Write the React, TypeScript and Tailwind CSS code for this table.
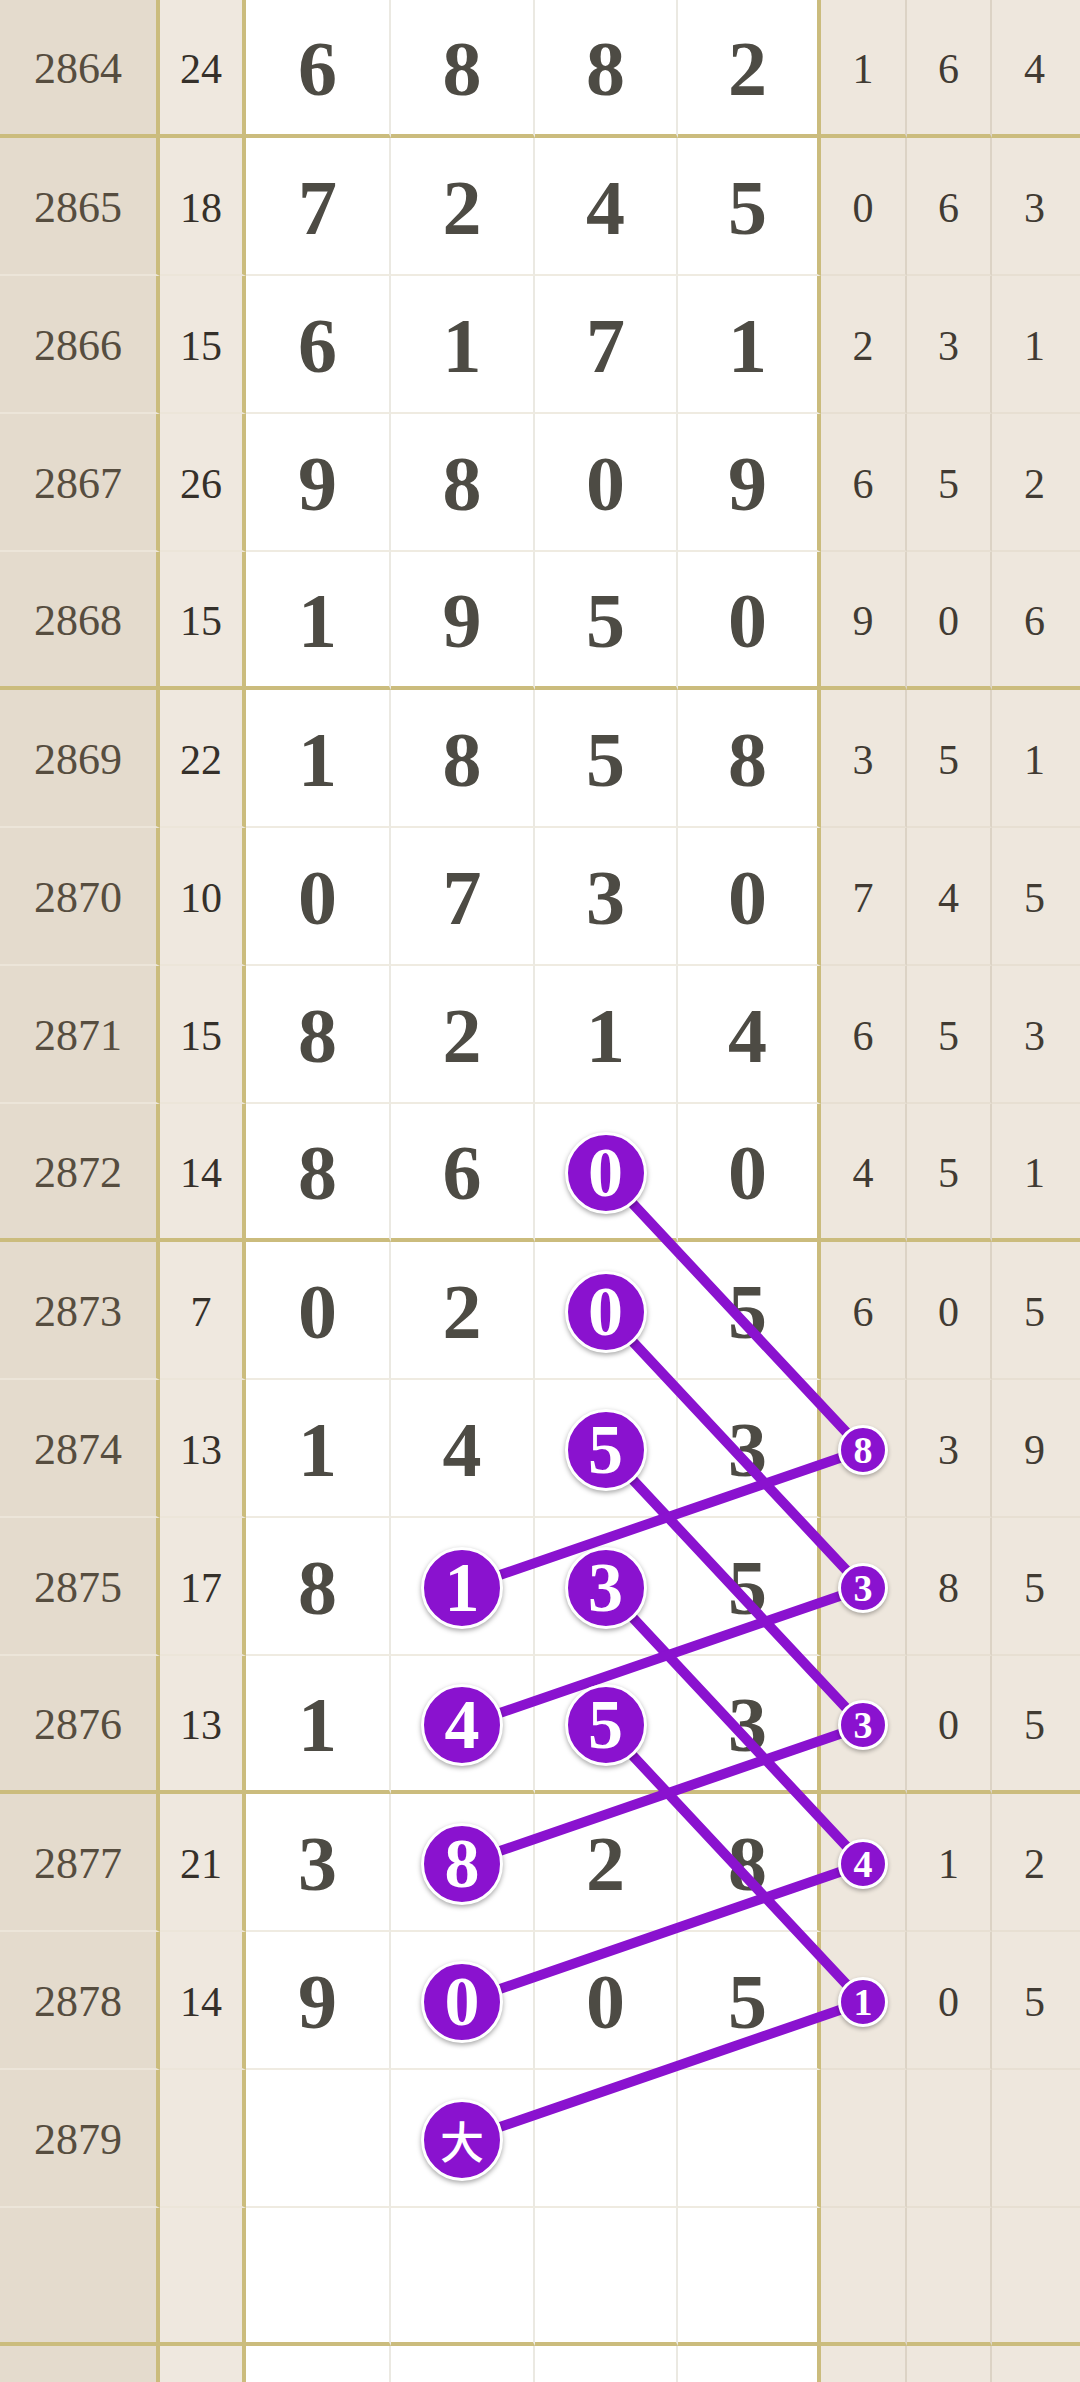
import type React from 'react'

type Row = {
  period: string
  sum: string
  main: string[]
  side: string[]
  mainBalls?: number[]
  sideBall?: boolean
}

const rows: Row[] = [
  { period: '2864', sum: '24', main: ['6', '8', '8', '2'], side: ['1', '6', '4'] },
  { period: '2865', sum: '18', main: ['7', '2', '4', '5'], side: ['0', '6', '3'] },
  { period: '2866', sum: '15', main: ['6', '1', '7', '1'], side: ['2', '3', '1'] },
  { period: '2867', sum: '26', main: ['9', '8', '0', '9'], side: ['6', '5', '2'] },
  { period: '2868', sum: '15', main: ['1', '9', '5', '0'], side: ['9', '0', '6'] },
  { period: '2869', sum: '22', main: ['1', '8', '5', '8'], side: ['3', '5', '1'] },
  { period: '2870', sum: '10', main: ['0', '7', '3', '0'], side: ['7', '4', '5'] },
  { period: '2871', sum: '15', main: ['8', '2', '1', '4'], side: ['6', '5', '3'] },
  { period: '2872', sum: '14', main: ['8', '6', '0', '0'], side: ['4', '5', '1'], mainBalls: [2] },
  { period: '2873', sum: '7', main: ['0', '2', '0', '5'], side: ['6', '0', '5'], mainBalls: [2] },
  { period: '2874', sum: '13', main: ['1', '4', '5', '3'], side: ['8', '3', '9'], mainBalls: [2], sideBall: true },
  { period: '2875', sum: '17', main: ['8', '1', '3', '5'], side: ['3', '8', '5'], mainBalls: [1, 2], sideBall: true },
  { period: '2876', sum: '13', main: ['1', '4', '5', '3'], side: ['3', '0', '5'], mainBalls: [1, 2], sideBall: true },
  { period: '2877', sum: '21', main: ['3', '8', '2', '8'], side: ['4', '1', '2'], mainBalls: [1], sideBall: true },
  { period: '2878', sum: '14', main: ['9', '0', '0', '5'], side: ['1', '0', '5'], mainBalls: [1], sideBall: true },
  { period: '2879', sum: '', main: ['', '大', '', ''], side: ['', '', ''], mainBalls: [1] },
  { period: '', sum: '', main: ['', '', '', ''], side: ['', '', ''] },
  { period: '', sum: '', main: ['', '', '', ''], side: ['', '', ''] },
]

// centres used by the connecting lines
const ROW_H = 138
const cy = (i: number) => i * ROW_H + 70
const COL2 = 462
const COL3 = 605
const SIDE = 863

const links: [number, number, number, number][] = [
  [COL3, cy(8), SIDE, cy(10)],
  [COL3, cy(9), SIDE, cy(11)],
  [COL3, cy(10), SIDE, cy(12)],
  [COL3, cy(11), SIDE, cy(13)],
  [COL3, cy(12), SIDE, cy(14)],
  [COL2, cy(11), SIDE, cy(10)],
  [COL2, cy(12), SIDE, cy(11)],
  [COL2, cy(13), SIDE, cy(12)],
  [COL2, cy(14), SIDE, cy(13)],
  [COL2, cy(15), SIDE, cy(14)],
]

const BigBall: React.FC<{ text: string }> = ({ text }) => (
  <div className="relative z-20 flex h-[82px] w-[82px] items-center justify-center rounded-full border-[3px] border-white bg-[#8a12cf] shadow-[0_2px_5px_rgba(0,0,0,0.35)]">
    {text === '大' ? (
      <span className="font-['Noto_Sans_CJK_SC',sans-serif] text-[44px] leading-none font-medium text-white">大</span>
    ) : (
      <span className="text-[70px] leading-none font-bold text-white">{text}</span>
    )}
  </div>
)

const SmallBall: React.FC<{ text: string }> = ({ text }) => (
  <div className="relative z-20 flex h-[50px] w-[50px] items-center justify-center rounded-full border-[3px] border-white bg-[#8a12cf] shadow-[0_2px_4px_rgba(0,0,0,0.3)]">
    <span className="text-[38px] leading-none font-bold text-white">{text}</span>
  </div>
)

const TableRow: React.FC<{ row: Row; index: number }> = ({ row, index }) => {
  const gold = index % 4 === 0
  const leftB = gold ? 'border-b-4 border-b-[#cbbc7d]' : 'border-b-2 border-b-[#ece5d9]'
  const mainB = gold ? 'border-b-4 border-b-[#cbbc7d]' : 'border-b-2 border-b-[#efebe1]'
  const sideB = gold ? 'border-b-4 border-b-[#cbbc7d]' : 'border-b-2 border-b-[#e7dfd2]'

  return (
    <div className="grid h-[138px] grid-cols-[160px_86px_145px_144px_143px_143px_86px_85px_85px_1fr]">
      <div className={`flex items-center justify-center border-r-4 border-r-[#cbbc7d] bg-[#e4dbcd] pt-[4px] text-[44px] text-[#564d3f] ${leftB}`}>
        {row.period}
      </div>
      <div className={`flex items-center justify-center border-r-4 border-r-[#cbbc7d] bg-[#efe8df] pt-[4px] text-[42px] text-[#35302a] ${leftB}`}>
        {row.sum}
      </div>
      {row.main.map((d, i) => (
        <div
          key={i}
          className={`flex items-center justify-center bg-white pt-[4px] ${mainB} ${
            i === 3 ? 'border-r-4 border-r-[#cbbc7d]' : 'border-r-2 border-r-[#ebe9e2]'
          }`}
        >
          {row.mainBalls?.includes(i) ? (
            <BigBall text={d} />
          ) : (
            <span className="text-[78px] leading-none font-bold text-[#4d4b44]">{d}</span>
          )}
        </div>
      ))}
      {row.side.map((d, i) => (
        <div
          key={i}
          className={`flex items-center justify-center bg-[#eee7dd] pt-[4px] ${sideB} ${i < 2 ? 'border-r-2 border-r-[#dcd3c5]' : ''}`}
        >
          {i === 0 && row.sideBall ? (
            <SmallBall text={d} />
          ) : (
            <span className="text-[42px] leading-none text-[#413b33]">{d}</span>
          )}
        </div>
      ))}
      <div className={`bg-[#eee7dd] ${sideB}`} />
    </div>
  )
}

export default function App() {
  return (
    <div className="relative h-[2382px] w-[1080px] overflow-hidden bg-white font-['Liberation_Serif','Noto_Sans_CJK_SC',serif]">
      <div className="flex flex-col">
        {rows.map((row, i) => (
          <TableRow key={i} row={row} index={i} />
        ))}
      </div>
      <svg className="pointer-events-none absolute top-0 left-0 z-10" width={1080} height={2382}>
        {links.map(([x1, y1, x2, y2], i) => (
          <line key={i} x1={x1} y1={y1} x2={x2} y2={y2} stroke="#8a12cf" strokeWidth={10} strokeLinecap="round" />
        ))}
      </svg>
    </div>
  )
}
